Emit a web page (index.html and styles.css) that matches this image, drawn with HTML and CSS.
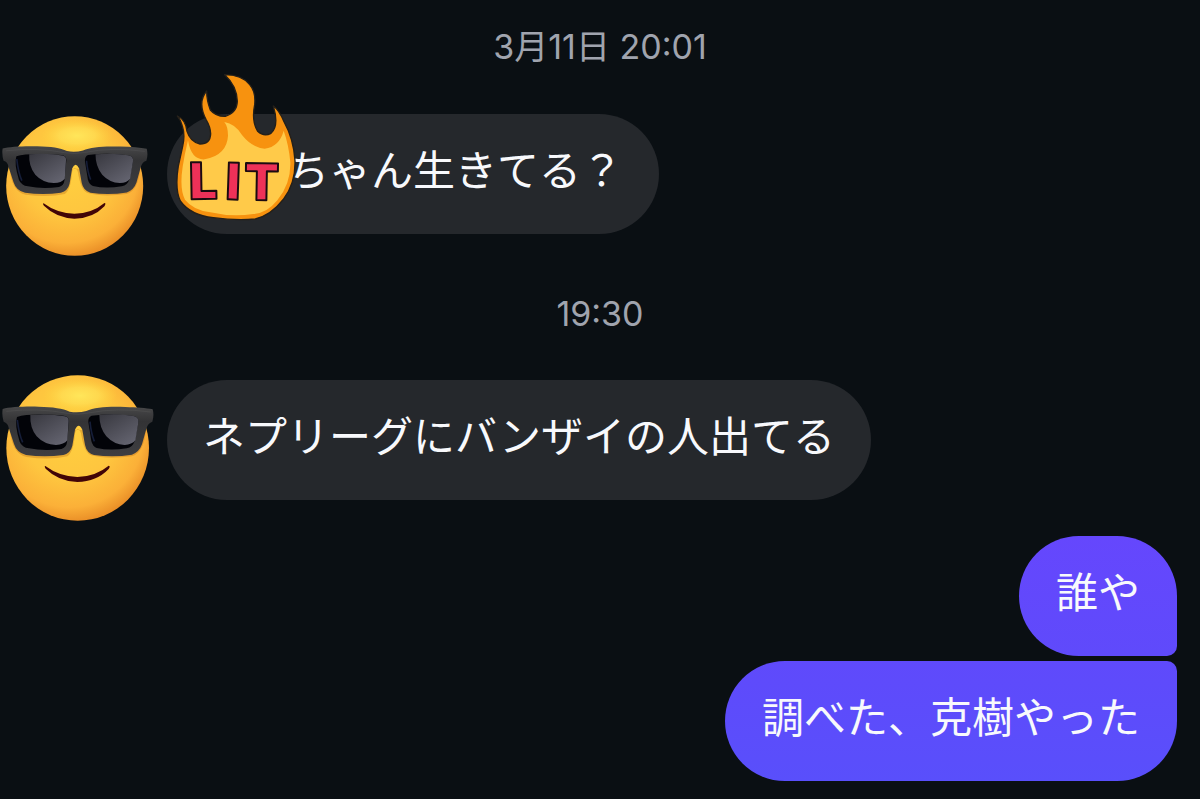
FILE: index.html
```html
<!DOCTYPE html>
<html lang="ja">
<head>
  <meta charset="UTF-8" />
  <meta name="viewport" content="width=device-width, initial-scale=1.0"/>
  <title>メッセージ</title>
  <link rel="stylesheet" href="styles.css">
</head>
<body>

  <svg class="defs" width="0" height="0" aria-hidden="true">
    <defs>
      <radialGradient id="skin" cx="0.44" cy="0.38" r="0.66">
        <stop offset="0" stop-color="#ffd03f"/>
        <stop offset="0.5" stop-color="#fec63f"/>
        <stop offset="0.8" stop-color="#fbb038"/>
        <stop offset="1" stop-color="#e58522"/>
      </radialGradient>
      <radialGradient id="shine">
        <stop offset="0" stop-color="#ffe65a"/>
        <stop offset="0.5" stop-color="#ffe055" stop-opacity="0.7"/>
        <stop offset="1" stop-color="#ffd43f" stop-opacity="0"/>
      </radialGradient>
      <linearGradient id="frame" x1="0" y1="0" x2="0" y2="1">
        <stop offset="0" stop-color="#484849"/>
        <stop offset="0.3" stop-color="#333335"/>
        <stop offset="1" stop-color="#3e3e41"/>
      </linearGradient>
      <linearGradient id="lens" x1="0" y1="0" x2="0.8" y2="1">
        <stop offset="0" stop-color="#38383f"/>
        <stop offset="1" stop-color="#646470"/>
      </linearGradient>
    </defs>
    <symbol id="cool" viewBox="6 28 456 442">
      <ellipse cx="233" cy="249" rx="214" ry="218" fill="url(#skin)"/>
      <ellipse cx="240" cy="92" rx="112" ry="50" fill="url(#shine)"/>
      <path d="M30 195Q36 267 80 276Q150 286 202 274Q221 261 225 205Q233 180 243 205Q252 264 274 271Q320 284 395 274Q432 263 438 194" fill="#b66a16" opacity="0.35"/>
      <path d="M8 132C30 126 70 124 116 125C160 126 188 130 209 140Q234 145 259 138C284 126 330 124 376 126C410 127 438 129 458 133Q463 151 457 170Q444 174 440 188L426 238Q418 261 396 269Q340 278 282 270Q260 264 255 240L247 194Q236 171 225 194L217 242Q212 264 190 270Q134 278 78 270Q50 263 42 237L26 188Q24 174 11 170Q5 151 8 132Z" fill="url(#frame)"/>
      <path d="M51 156Q90 144 191 152Q207 154 207 168L201 232Q199 248 184 252Q132 259 87 250Q66 247 59 230Q43 178 51 156Z" fill="#020308"/>
      <path d="M91 150Q150 145 194 154Q207 156 206 168L202 226Q192 239 168 240Q133 239 110 214Q89 188 91 150Z" fill="url(#lens)"/>
      <path d="M275 152Q340 144 400 153Q418 156 415 173L404 228Q398 247 380 250Q330 258 290 249Q278 244 274 228L265 171Q264 156 275 152Z" fill="#020308"/>
      <path d="M298 150Q356 145 400 153Q418 156 415 173L406 226Q396 239 374 240Q342 239 319 214Q298 188 298 150Z" fill="url(#lens)"/>
      <path d="M52 165Q57 208 68 232M270 170Q273 205 283 229" fill="none" stroke="#151d38" stroke-width="5"/>
      <path d="M19 139Q116 128 202 145Q234 151 265 144Q350 127 452 141" fill="none" stroke="#59595b" stroke-width="3" opacity="0.4"/>
      <path d="M136 303Q177 334 232 336Q288 334 326 302Q332 302 326 312Q290 350 232 351Q175 349 137 311Q132 304 136 303Z" fill="#420507"/>
    </symbol>
  </svg>

  <main class="chat">
    <time class="stamp">3月11日 20:01</time>

    <div class="row">
      <div class="avatar">
        <svg class="face face-small" role="img" aria-label="😎"><use href="#cool"/></svg>
      </div>
      <p class="bubble named">ちゃん生きてる？
        <svg class="sticker" viewBox="42 32 366 450">
          <path d="M52 167Q77 178 81 213Q91 245 120 251Q151 251 152 220Q151 199 139 179Q111 126 140 92Q140 120 151 149Q168 169 196 168Q231 158 232 123Q231 77 194 43Q246 43 269 73Q288 95 284 133Q274 183 293 213Q312 231 333 219Q358 197 340 137Q357 149 372 184Q401 236 405 301Q407 368 371 416Q333 465 286 476Q226 481 160 472Q92 465 61 422Q44 387 55 317L68 258Q76 224 67 197Q62 178 52 167Z" fill="#f7920f" stroke="#25201a" stroke-width="4" stroke-linejoin="round"/>
          <path d="M84 240Q94 300 134 297Q201 284 204 226Q204 199 193 185Q225 190 246 224Q275 261 314 265Q358 259 371 211Q386 252 391 306Q393 370 352 420Q321 459 280 461Q216 471 151 456Q99 449 75 418Q58 385 68 319Q74 281 84 240Z" fill="#ffca49"/>
          <text class="lit" x="88 196 252" y="417 417 418" rotate="-1 2 1">LIT</text>
        </svg>
      </p>
    </div>

    <time class="stamp">19:30</time>

    <div class="row row-large">
      <div class="avatar">
        <svg class="face" role="img" aria-label="😎"><use href="#cool"/></svg>
      </div>
      <p class="bubble">ネプリーグにバンザイの人出てる</p>
    </div>

    <div class="sent">
      <p class="bubble mine first">誰や</p>
      <p class="bubble mine last">調べた、克樹やった</p>
    </div>
  </main>

</body>
</html>
```
FILE: styles.css
```css
* {
  box-sizing: border-box;
}

body {
  margin: 0;
  background-color: #0a0f13;
  color: #f8f9fc;
  font-family: Inter, "Noto Sans CJK JP", sans-serif;
}

.defs {
  position: absolute;
}

.chat {
  display: flex;
  flex-direction: column;
  padding: 27px 0 18px;
}

.stamp {
  align-self: center;
  color: #a0a4ae;
  font-size: 34px;
  line-height: 40px;
}

.row {
  display: flex;
  align-items: flex-start;
  gap: 13px;
  padding-left: 2px;
  margin: 47px 0 36px;
}

.row-large {
  margin: 40px 0 14px;
}

.row-large .bubble {
  margin-top: 6px;
}

.avatar {
  flex: none;
  width: 152px;
}

.face {
  display: block;
  width: 152px;
  height: 148px;
}

.face-small {
  width: 146px;
  height: 144px;
}

.bubble {
  position: relative;
  margin: 0;
  padding: 24px 36px 36px;
  border-radius: 60px;
  background-color: #25282c;
  font-family: "Noto Sans CJK JP", sans-serif;
  font-size: 42px;
  line-height: 60px;
}

/* room for the sticker that covers the name */
.named {
  padding-left: 120px;
}

.sticker {
  position: absolute;
  left: 7px;
  top: -43px;
  width: 122px;
  height: 150px;
}

.lit {
  font-family: Inter, sans-serif;
  font-size: 152px;
  font-weight: 900;
  fill: #ee3158;
  stroke: #1b0b10;
  stroke-width: 6px;
  stroke-linejoin: round;
}

.sent {
  display: flex;
  flex-direction: column;
  align-items: flex-end;
  gap: 5px;
  padding-right: 23px;
}

.mine {
  padding-left: 37px;
  padding-right: 37px;
}

.first {
  background: linear-gradient(#6547fd, #5f4afb);
  border-bottom-right-radius: 10px;
}

.last {
  background: linear-gradient(#5f4afb, #594ffb);
  border-top-right-radius: 10px;
}
```
